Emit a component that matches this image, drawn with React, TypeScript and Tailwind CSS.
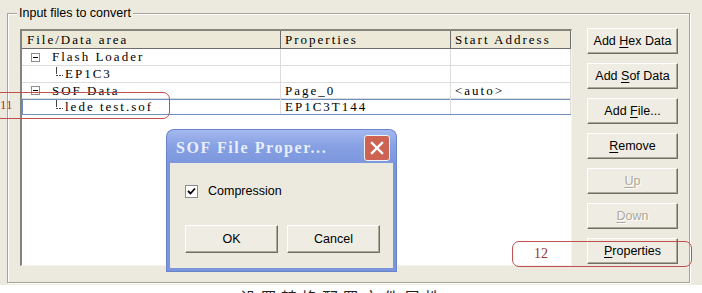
import React from "react";

const btn =
  "flex items-center justify-center bg-[#EFEDE3] border border-t-white border-l-white border-r-[#716F64] border-b-[#716F64] shadow-[inset_-1px_-1px_0_#ACA899] text-[12.5px] leading-none";

function Btn({ label, u, disabled, w = "w-[91px]", h = "h-[26px]" }: { label: string; u?: number; disabled?: boolean; w?: string; h?: string }) {
  const text =
    u === undefined ? (
      label
    ) : (
      <>
        {label.slice(0, u)}
        <span className="underline underline-offset-2">{label.slice(u, u + 1)}</span>
        {label.slice(u + 1)}
      </>
    );
  return (
    <div className={`${btn} ${w} ${h} ${disabled ? "text-[#ACA899] [text-shadow:1px_1px_0_#fff]" : "text-black"}`}>
      <span className="whitespace-pre">{text}</span>
    </div>
  );
}

function MinusBox() {
  return (
    <span className="flex items-center justify-center w-[9px] h-[9px] border border-[#8d8d8d] bg-white">
      <span className="block w-[5px] h-px bg-black" />
    </span>
  );
}

function Branch() {
  return (
    <svg width="9" height="16" viewBox="0 0 9 16" className="shrink-0">
      <path d="M1 1v7M1 9h2M4 9h2M7 9h1" stroke="#444" strokeWidth="1" fill="none" shapeRendering="crispEdges" />
    </svg>
  );
}

const cell = "h-full flex items-center border-r border-[#DCDCDC] pl-[4px]";
const mono = "font-['Liberation_Serif','Times_New_Roman',serif] text-[13px] tracking-[2px]";

export default function App() {
  const rows = [
    { h: "h-[17px]", first: <><span className="ml-[9px]"><MinusBox /></span><span className="ml-[12px]">Flash Loader</span></>, p: "", a: "" },
    { h: "h-[17px]", first: <><span className="ml-[33px] flex"><Branch /></span><span className="ml-[1px]">EP1C3</span></>, p: "", a: "" },
    { h: "h-[16px]", first: <><span className="ml-[9px]"><MinusBox /></span><span className="ml-[12px]">SOF Data</span></>, p: "Page_0", a: "<auto>" },
    { h: "h-[16px]", first: <><span className="ml-[33px] flex"><Branch /></span><span className="ml-[1px]">lede test.sof</span></>, p: "EP1C3T144", a: "", sel: true },
  ];

  return (
    <div className="relative w-[702px] h-[293px] overflow-hidden bg-white text-black font-['Liberation_Sans',Arial,sans-serif]">
      <div className="h-[285px] bg-[#ECEADF] pt-[13px] pl-[7px]">
        <div className="relative w-[683px] h-[270px] border border-[#A5A395] shadow-[inset_1px_1px_0_#fff,1px_1px_0_#fff]">
          <span className="absolute left-[9px] top-[-8px] px-[2px] bg-[#ECEADF] text-[12.5px] leading-[14px]">Input files to convert</span>

          <div className="flex items-start pl-[12px] pt-[15px]">
            {/* list view */}
            <div className={`w-[552px] h-[237px] bg-white border-l-2 border-t-2 border-[#85847A] border-r border-b border-r-[#F4F3EC] border-b-[#F4F3EC] ${mono}`}>
              <div className="flex h-[18px] bg-[#ECE9D8] border-b border-[#6D6D6D]">
                <div className="w-[259px] h-full flex items-center border-r border-[#6D6D6D] pl-[5px]">File/Data area</div>
                <div className="w-[170px] h-full flex items-center border-r border-[#6D6D6D] pl-[4px]">Properties</div>
                <div className="w-[120px] h-full flex items-center border-r border-[#6D6D6D] pl-[4px]">Start Address</div>
              </div>
              {rows.map((r, i) => (
                <div key={i} className={`flex ${r.h} border-b ${r.sel ? "border-[#6F8FBF] shadow-[inset_0_1px_0_#6F8FBF,inset_1px_0_0_#6F8FBF,inset_-1px_0_0_#6F8FBF]" : "border-[#DCDCDC]"}`}>
                  <div className="w-[259px] h-full flex items-center border-r border-[#DCDCDC]">{r.first}</div>
                  <div className={`w-[170px] ${cell}`}>{r.p}</div>
                  <div className={`w-[120px] ${cell}`}>{r.a}</div>
                </div>
              ))}
            </div>

            {/* buttons */}
            <div className="ml-[15px] -mt-px flex flex-col gap-[9px]">
              <Btn label="Add Hex Data" u={4} />
              <Btn label="Add Sof Data" u={4} />
              <Btn label="Add File..." u={4} />
              <Btn label="Remove" u={0} />
              <Btn label="Up" u={0} disabled />
              <Btn label="Down" u={0} disabled />
              <Btn label="Properties" u={0} />
            </div>
          </div>
        </div>
      </div>

      <div className="pt-[4px] pl-[240px] text-[16px] leading-[16px] tracking-[4.5px] text-[#222] font-['Noto_Sans_CJK_SC',sans-serif]">设置转换配置文件属性</div>

      {/* dialog */}
      <div className="absolute left-[167px] top-[130px] w-[229px] h-[141px] rounded-t-[7px] bg-[#7A95DC] px-[3px] pb-[3px] flex flex-col shadow-[0_0_0_1px_#6A84CC]">
        <div className="h-[33px] flex items-center justify-between -mx-[3px] pl-[9px] pr-[6px] rounded-t-[7px] bg-gradient-to-b from-[#A3B8EE] via-[#86A0E3] to-[#7C97DD]">
          <span className="pt-[3px] text-[16px] font-bold tracking-[1.6px] text-[#E8EEFB] font-['Liberation_Serif','Times_New_Roman',serif]">SOF File Proper...</span>
          <span className="mt-[2px] flex items-center justify-center w-[26px] h-[26px] rounded-[3px] border border-[#F2F2F2] bg-[#CD6353]">
            <svg width="16" height="16" viewBox="0 0 16 16">
              <path d="M3 3l10 10M13 3L3 13" stroke="#fff" strokeWidth="2.4" strokeLinecap="square" />
            </svg>
          </span>
        </div>
        <div className="flex-1 bg-[#ECEADF] pl-[15px] pt-[22px]">
          <div className="flex items-center gap-[10px] h-[13px]">
            <span className="flex items-center justify-center w-[13px] h-[13px] bg-white border border-[#8A8A8A]">
              <svg width="9" height="9" viewBox="0 0 9 9">
                <path d="M1 4l2.5 2.5L8 1.5" stroke="#000" strokeWidth="1.8" fill="none" />
              </svg>
            </span>
            <span className="text-[12.5px] leading-none">Compression</span>
          </div>
          <div className="flex gap-[9px] mt-[27px]">
            <Btn label="OK" w="w-[93px]" h="h-[28px]" />
            <Btn label="Cancel" w="w-[93px]" h="h-[28px]" />
          </div>
        </div>
      </div>

      {/* annotations */}
      <div className="absolute left-[-6px] top-[92px] w-[176px] h-[27px] border-[1.5px] border-[#C0504D] rounded-[7px]" />
      <span className="absolute left-0 top-[98px] text-[13px] leading-[14px] text-[#B0302A] font-['Liberation_Serif',serif]">11</span>
      <div className="absolute left-[512px] top-[241px] w-[180px] h-[26px] border-[1.5px] border-[#C0504D] rounded-[7px]" />
      <span className="absolute left-[534px] top-[246px] text-[14px] leading-[15px] text-[#A0302A] font-['Liberation_Serif',serif]">12</span>
    </div>
  );
}
